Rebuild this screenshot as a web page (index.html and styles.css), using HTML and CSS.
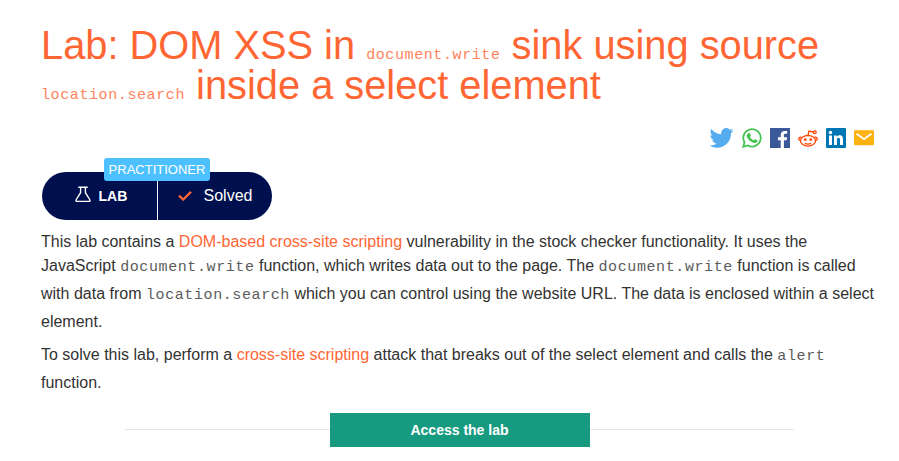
FILE: index.html
```html
<!DOCTYPE html>
<html lang="en">
<head>
<meta charset="utf-8">
<title>Lab: DOM XSS in document.write sink</title>
<link rel="stylesheet" href="styles.css">
</head>
<body>
<main class="page">
  <h1 class="title">Lab: DOM XSS in <code>document.write</code> sink using source <br><code>location.search</code> inside a select element</h1>

  <div class="share">
    <svg class="twitter" viewBox="0 0 24 20"><path fill="#55acee" d="M24 2.4a10 10 0 0 1-2.8.8A5 5 0 0 0 23.300.5a10 10 0 0 1-3.100 1.200A4.900 4.900 0 0 0 11.800 6.200 14 14 0 0 1 1.700 1.100a4.900 4.900 0 0 0 1.500 6.600A5 5 0 0 1 1 7.100a4.900 4.900 0 0 0 3.900 4.900 5 5 0 0 1-2.200.1 4.900 4.900 0 0 0 4.600 3.400A9.900 9.900 0 0 1 0 17.500a14 14 0 0 0 7.500 2.200c9.100 0 14.400-7.700 14-14.700A10 10 0 0 0 24 2.400z"/></svg>
    <svg class="icon" viewBox="0 0 20 20"><path fill="none" stroke="#43c351" stroke-width="1.800" d="M1.300 18.700l1.200-4.500a8.700 8.700 0 1 1 3.400 3.300z"/><path fill="#43c351" d="M6.500 5h1c.4 0 .5.200.6.500l.8 1.900c.1.300 0 .5-.9 1.500.9 1.700 2.100 2.700 3.800 3.400.8-.9 1-1.300 1.400-1.100l2.100 1c.3.200.2 1.300-.2 1.900-.7.900-2.200 1.300-3.700.7-3.200-1.100-5.200-3.200-6.400-5.500C4.200 7.700 5.200 5.700 6.500 5z"/></svg>
    <svg class="icon" viewBox="0 0 20 20"><path fill="#3b5998" d="M0 0h20v20H0z"/><path fill="#fff" d="M10.700 20v-7.800H8V9.200h2.700V7c0-2.700 1.600-4.100 4-4.100 1.200 0 2.200.1 2.500.1v2.800h-1.700c-1.300 0-1.600.6-1.600 1.600v1.800h3.200l-.4 3h-2.800V20z"/></svg>
    <svg class="icon" viewBox="0 0 20 20"><g fill="none" stroke="#ff4500" stroke-width="1.300"><ellipse cx="10" cy="12.800" rx="7.500" ry="5.300"/><path d="M10 7.400l1-4.400 4.200 1"/><circle cx="16.800" cy="4.200" r="1.400"/><path d="M3.600 9.700C2.200 8 .2 10.300 1 11.800c.3.600 1 .8 1.700.9M16.400 9.700c1.400-1.700 3.400.6 2.600 2.100-.3.600-1 .8-1.700.9M6.900 15c1.700 1.300 4.500 1.300 6.200 0"/></g><circle cx="7.200" cy="11.600" r="1.400" fill="#ff4500"/><circle cx="12.800" cy="11.600" r="1.400" fill="#ff4500"/></svg>
    <svg class="icon" viewBox="0 0 20 20"><rect width="20" height="20" rx="1" fill="#0077b5"/><path fill="#fff" d="M3 7.500h3V17H3zM8 7.500h2.800v1.300c.5-.9 1.500-1.500 2.800-1.500 2.800 0 3.400 1.800 3.400 4.300V17h-3v-4.800c0-1.200-.1-2.400-1.500-2.400-1.400 0-1.600 1.100-1.600 2.300V17H8z"/><circle cx="4.500" cy="4.500" r="1.700" fill="#fff"/></svg>
    <svg class="icon" viewBox="0 0 20 20"><rect y="2.200" width="20" height="15" rx="1.200" fill="#feb20f"/><path fill="none" stroke="#fff" stroke-width="1.800" d="M2.500 5.700L10 11.200l7.500-5.500"/></svg>
  </div>

  <div class="status">
    <span class="level">PRACTITIONER</span>
    <div class="lab">
      <svg class="flask" viewBox="0 0 16 17"><path fill="none" stroke="#fff" stroke-width="1.400" d="M3.300 1.200h9.400M5.600 1.200v5.500L1.300 13.500c-.7 1.200-.2 1.900.9 1.900h11.600c1.100 0 1.600-.7.900-1.900L10.400 6.700V1.200"/></svg>
      <b>LAB</b>
    </div>
    <div class="solved">
      <svg class="check" viewBox="0 0 14 10"><path fill="none" stroke="#ff6633" stroke-width="2.200" d="M1 4.600l4.200 4L13 .9"/></svg>
      <span>Solved</span>
    </div>
  </div>

  <p class="intro">
    <span class="first">This lab contains a <a>DOM-based cross-site scripting</a> vulnerability in the stock checker functionality. It uses the</span>
    <span>JavaScript <code>document.write</code> function, which writes data out to the page. The <code>document.write</code> function is called</span>
    <span>with data from <code>location.search</code> which you can control using the website URL. The data is enclosed within a select</span>
    <span>element.</span>
  </p>
  <p>
    <span>To solve this lab, perform a <a>cross-site scripting</a> attack that breaks out of the select element and calls the <code>alert</code></span>
    <span>function.</span>
  </p>

  <div class="access"><a class="button">Access the lab</a></div>
</main>
</body>
</html>
```

FILE: styles.css
```css
* { box-sizing: border-box; }
body {
  margin: 0;
  background: #fff;
  color: #333332;
  font: 16px/28px "Liberation Sans", Arial, sans-serif;
  overflow: hidden;
}
.page { padding: 25px 24px 0 41px; white-space: nowrap; }
.title {
  margin: 0;
  color: #ff6633;
  font-size: 39.8px;
  font-weight: 400;
  line-height: 40px;
}
code {
  font-family: "Liberation Mono", monospace;
  font-size: 15px;
  letter-spacing: 0.6px;
  line-height: 1;
  opacity: 0.8;
}
.share {
  display: flex;
  justify-content: flex-end;
  align-items: center;
  gap: 8px;
  height: 20px;
  margin: 23px 1px 0 0;
}
.share svg { display: block; }
.icon { width: 20px; height: 20px; }
.twitter { width: 25px; height: 20px; }
.status {
  position: relative;
  display: flex;
  width: 230px;
  height: 48px;
  margin: 24px 0 0 1px;
  border-radius: 24px;
  background: #00104f;
  color: #fff;
}
.level {
  position: absolute;
  left: 62px;
  top: -14px;
  width: 106px;
  height: 23px;
  border-radius: 3px;
  background: #4dc1ff;
  font-size: 13px;
  line-height: 24px;
  text-align: center;
}
.lab, .solved { display: flex; align-items: center; }
.lab { width: 116px; padding-left: 33px; gap: 7.500px; border-right: 1px solid #fff; font-size: 14px; }
.flask { width: 16px; height: 17px; margin-bottom: 4px; }
.solved { padding-left: 20px; gap: 11.500px; }
.check { width: 14px; height: 10px; }
p { margin: 0 0 5px; }
.intro { margin-top: 8px; }
p span { display: block; height: 28px; }
p .first { height: 24px; }
p a { color: #ff6633; }
.access {
  display: flex;
  align-items: center;
  margin: 16px 81px 0 84px;
}
.access::before, .access::after { content: ""; flex: 1; height: 1px; margin-top: -1px; background: #e4e4e4; }
.button {
  width: 260px;
  height: 34px;
  background: #179b80;
  color: #fff;
  font-size: 14px;
  font-weight: 700;
  line-height: 34px;
  text-align: center;
}
```
